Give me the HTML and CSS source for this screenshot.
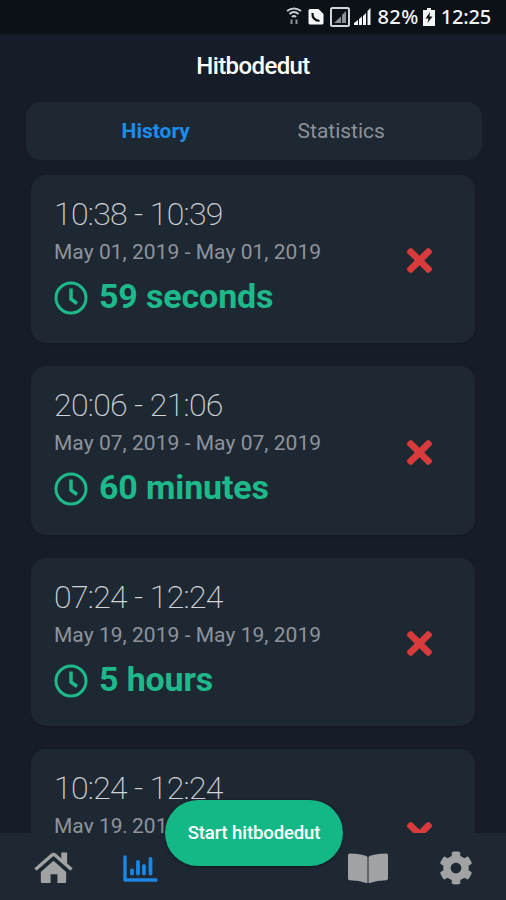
FILE: index.html
```html
<!DOCTYPE html>
<html lang="en">
<head>
<meta charset="utf-8">
<title>Hitbodedut</title>
<link rel="stylesheet" href="styles.css">
</head>
<body>
<svg class="sprite" aria-hidden="true">
  <symbol id="clock" viewBox="0 0 34 34"><g fill="none" stroke="currentColor"><circle cx="17" cy="17" r="15" stroke-width="3"/><path d="M17 7.500v10.500l6 4.500" stroke-width="3.500"/></g></symbol>
  <symbol id="times" viewBox="0 80 352 352"><path fill="currentColor" d="M242.72 256l100.07-100.07c12.28-12.28 12.28-32.19 0-44.48l-22.24-22.24c-12.28-12.28-32.19-12.28-44.48 0L176 189.28 75.93 89.21c-12.28-12.28-32.19-12.28-44.48 0L9.21 111.45c-12.28 12.28-12.28 32.19 0 44.48L109.28 256 9.21 356.07c-12.28 12.28-12.28 32.19 0 44.48l22.24 22.24c12.28 12.28 32.2 12.28 44.48 0L176 322.72l100.07 100.07c12.28 12.28 32.2 12.28 44.48 0l22.24-22.24c12.28-12.28 12.28-32.19 0-44.48L242.72 256z"/></symbol>
</svg>
<div class="screen">
  <header class="status">
    <svg class="status-icons" viewBox="0 0 86 22" width="86" height="22">
      <g fill="none" stroke="#c9ccd0" stroke-width="2"><path d="M1 6q7-5 14 0M3.500 9q4.500-4 9 0M6 12q2-2 4 0"/><path d="M5.500 19v-4.500M10.500 19v-4.500" stroke="#8b9096"/></g>
      <path fill="#f4f5f6" d="M24 4H32.500l5 5v9q0 1.500-1.500 1.500h-12q-1.500 0-1.500-1.500v-12.500Q22.500 4 24 4z"/>
      <path fill="none" stroke="#0c1118" stroke-width="2.200" d="M26.500 8q-.5 7 7 8"/>
      <rect x="45" y="3" width="18" height="18" rx="1.500" fill="none" stroke="#d4d6d9" stroke-width="2"/>
      <path fill="#8b9096" d="M48 18l7-6.500V18zM56 18V10l4-4v12z"/>
      <path fill="#f4f5f6" d="M68 20v-2l4-3v5zM73 20v-6l3-2.500V20zM77 20V11l3-3v12zM81.500 20V6L84.500 3v17z"/>
    </svg>
    <span class="percent">82%</span>
    <svg class="battery" viewBox="0 0 12 18" width="12" height="18"><path fill="#f4f5f6" d="M4 0h4v2h4v16H0V2h4z"/><path fill="#0c1118" d="M7 4L2.500 10.500H5.500L4.500 15 9.500 8.500H6.500z"/></svg>
    <span class="time">12:25</span>
  </header>
  <h1 class="title"><span>Hitbodedut</span></h1>
  <nav class="tabs"><span class="tab active">History</span><span class="tab">Statistics</span></nav>
  <main class="list">
    <article class="card"><div class="info"><div class="range">10:38 - 10:39</div><div class="dates">May 01, 2019 - May 01, 2019</div><div class="duration"><svg class="clock"><use href="#clock"/></svg><span>59 seconds</span></div></div><svg class="delete"><use href="#times"/></svg></article>
    <article class="card"><div class="info"><div class="range">20:06 - 21:06</div><div class="dates">May 07, 2019 - May 07, 2019</div><div class="duration"><svg class="clock"><use href="#clock"/></svg><span>60 minutes</span></div></div><svg class="delete"><use href="#times"/></svg></article>
    <article class="card"><div class="info"><div class="range">07:24 - 12:24</div><div class="dates">May 19, 2019 - May 19, 2019</div><div class="duration"><svg class="clock"><use href="#clock"/></svg><span>5 hours</span></div></div><svg class="delete"><use href="#times"/></svg></article>
    <article class="card"><div class="info"><div class="range">10:24 - 12:24</div><div class="dates">May 19, 201</div></div><svg class="delete"><use href="#times"/></svg></article>
  </main>
  <footer class="bottom">
    <svg class="home" viewBox="0 0 40 32"><path fill="currentColor" d="M20 8.500L33 20v10q0 1.500-1.500 1.500H24v-9h-7v9H8.500Q7 31.500 7 30V20z"/><path fill="none" stroke="currentColor" stroke-width="3.400" stroke-linejoin="round" d="M1.500 17.500L18.500 2.700q1.500-1.200 3 0L38.500 17.500"/><path fill="currentColor" d="M28 0h6v13l-6-5z"/></svg>
    <svg class="chart" viewBox="0 0 35 27"><path fill="none" stroke="currentColor" stroke-width="3.400" stroke-linecap="round" stroke-linejoin="round" d="M2 2v23h31"/><path fill="none" stroke="currentColor" stroke-width="3.800" stroke-linecap="round" d="M9 18.500v-3M15 18.500V7M21 18.500v-7.500M27.500 18.500V4"/></svg>
    <svg class="book" viewBox="0 0 40 31"><path fill="currentColor" d="M0 2.200Q0 .5 1.800.5Q12 .8 18.500 3q1 .5 1 1.500v25q0 1-1.200.5Q11 27.500 1.800 27.200Q0 27 0 25.500zM40 2.200Q40 .5 38.200.5Q28 .8 21.500 3q-1 .5-1 1.500v25q0 1 1.200.5Q29 27.500 38.200 27.200Q40 27 40 25.500z"/></svg>
    <svg class="gear" viewBox="0 0 512 512"><path fill="currentColor" d="M487.400 315.700l-42.600-24.600c4.300-23.200 4.300-47 0-70.200l42.600-24.600c4.900-2.800 7.100-8.600 5.500-14-11.100-35.600-30-67.800-54.700-94.600-3.800-4.100-10-5.100-14.800-2.300L380.800 110c-17.900-15.400-38.500-27.300-60.800-35.100V25.800c0-5.600-3.900-10.500-9.400-11.700-36.700-8.200-74.300-7.800-109.200 0-5.500 1.200-9.400 6.100-9.400 11.700V75c-22.200 7.900-42.800 19.800-60.800 35.100L88.700 85.500c-4.900-2.800-11-1.900-14.800 2.300-24.700 26.700-43.600 58.900-54.700 94.600-1.700 5.400.6 11.200 5.500 14L67.300 221c-4.300 23.200-4.300 47 0 70.200l-42.600 24.600c-4.900 2.800-7.100 8.600-5.500 14 11.100 35.600 30 67.800 54.700 94.600 3.800 4.100 10 5.100 14.800 2.300l42.600-24.600c17.900 15.400 38.500 27.300 60.800 35.100v49.200c0 5.600 3.900 10.500 9.400 11.700 36.700 8.200 74.300 7.800 109.200 0 5.500-1.200 9.400-6.100 9.400-11.700v-49.200c22.200-7.900 42.800-19.800 60.800-35.100l42.600 24.600c4.900 2.800 11 1.900 14.800-2.300 24.700-26.700 43.600-58.900 54.700-94.600 1.500-5.500-.7-11.300-5.600-14.100zM256 336c-44.100 0-80-35.900-80-80s35.900-80 80-80 80 35.900 80 80-35.900 80-80 80z"/></svg>
    <button class="start"><span>Start hitbodedut</span></button>
  </footer>
</div>
</body>
</html>
```
FILE: styles.css
```css
* { box-sizing: border-box; }
body { margin: 0; background: #171d28; font-family: Roboto, "Liberation Sans", sans-serif; }
.sprite { position: absolute; width: 0; height: 0; }
.screen { width: 506px; height: 900px; display: flex; flex-direction: column; overflow: hidden; }
.status { flex: none; height: 34px; background: #0c1118; display: flex; align-items: center; justify-content: flex-end; padding-right: 15px; color: #f4f5f6; font: 500 20px/34px "Noto Sans", sans-serif; }
.percent { letter-spacing: 0.5px; }
.time { letter-spacing: -0.2px; }
.status-icons { margin: 0 5px 2px 0; }
.battery { margin: 0 6px 0 4px; }
.title { flex: none; height: 68px; margin: 0; padding-top: 1px; line-height: 62px; text-align: center; color: #fff; font-size: 24px; font-weight: 500; letter-spacing: -0.6px; }
.tabs { flex: none; height: 58px; margin: 0 24px 15px 26px; padding: 0 48px 0 37px; border-radius: 15px; background: #1e2833; display: flex; align-items: center; }
.tab { flex: 1; text-align: center; color: #8c919a; font-size: 21px; line-height: 60px; }
.active { color: #1b8eed; font-weight: 700; }
.list { flex: 1; min-height: 0; overflow: hidden; padding: 0 31px; display: flex; flex-direction: column; gap: 23px; }
.card { flex: none; height: 168.400px; border-radius: 15px; background: #1e2833; display: flex; align-items: center; justify-content: space-between; padding: 0 43px 0 23px; box-shadow: 0 1px 2px #121821; }
.info { align-self: flex-start; padding-top: 21px; white-space: nowrap; }
.range { color: #d0d3d8; font-size: 32px; font-weight: 200; line-height: 37px; letter-spacing: -0.7px; }
.dates { color: #8e939c; font-size: 21px; line-height: 38px; letter-spacing: 0.04px; }
.duration { color: #1eb98b; font-size: 34px; font-weight: 700; line-height: 50px; display: flex; align-items: center; gap: 11px; letter-spacing: -0.15px; }
.clock { width: 34px; height: 34px; margin-top: 4px; }
.delete { width: 25px; height: 25px; margin-top: 3px; color: #d93b3d; }
.bottom { flex: none; position: relative; height: 67px; background: #1e2833; color: #a1a2a4; display: flex; align-items: center; padding: 3px 33px 0 34px; }
.home { width: 39px; height: 32px; }
.chart { width: 35px; height: 27px; margin-left: 50px; color: #1b86e3; }
.book { width: 40px; height: 31px; margin-left: auto; }
.gear { width: 34px; height: 34px; margin-left: 51px; }
.start { position: absolute; left: 165px; top: -33px; width: 178px; height: 66px; border: 0; border-radius: 33px; background: #14b886; color: #fff; font: 500 18.500px Roboto, sans-serif; letter-spacing: -0.1px; box-shadow: 0 1px 3px #101720; }
```
